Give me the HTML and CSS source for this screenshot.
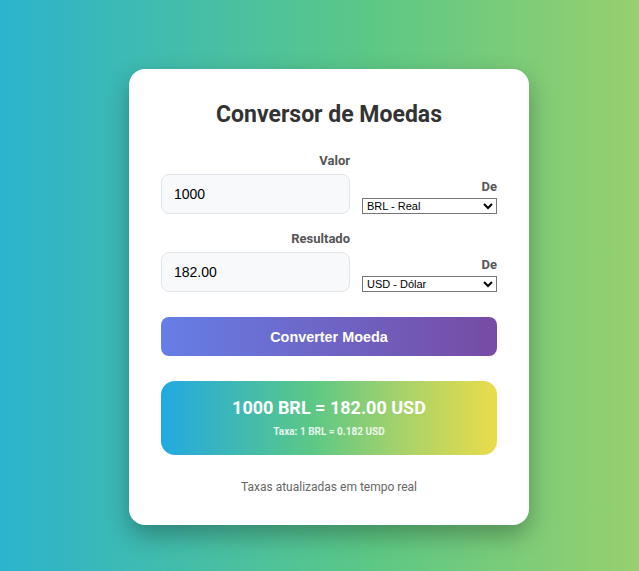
FILE: index.html
```html
<!DOCTYPE html>
<html lang="pt-BR">
<head>
<meta charset="utf-8">
<title>Conversor de Moedas</title>
<link rel="stylesheet" href="styles.css">
</head>
<body>
<main class="card">
  <h1 class="title">Conversor de Moedas</h1>
  <div class="row">
    <div class="field">
      <label class="label" for="valor">Valor</label>
      <input class="amount" id="valor" type="text" value="1000">
    </div>
    <div class="field">
      <label class="label" for="de1">De</label>
      <select class="currency" id="de1">
        <option>BRL - Real</option>
      </select>
    </div>
  </div>
  <div class="row">
    <div class="field">
      <label class="label" for="res">Resultado</label>
      <input class="amount" id="res" type="text" value="182.00" readonly>
    </div>
    <div class="field">
      <label class="label" for="de2">De</label>
      <select class="currency" id="de2">
        <option>USD - Dólar</option>
      </select>
    </div>
  </div>
  <button class="convert" type="button">Converter Moeda</button>
  <div class="result">
    <div class="result-main">1000 BRL = 182.00 USD</div>
    <div class="result-rate">Taxa: 1 BRL = 0.182 USD</div>
  </div>
  <p class="footer">Taxas atualizadas em tempo real</p>
</main>
</body>
</html>
```
FILE: styles.css
```css
html, body {
  margin: 0;
  padding: 0;
}
body {
  min-height: 571px;
  background: linear-gradient(90deg, #2cb3ce 0%, #5cc885 58%, #97d06e 100%);
  font-family: Roboto, "Liberation Sans", Arial, sans-serif;
  display: flex;
  justify-content: center;
  align-items: flex-start;
  padding: 69px 0 0 19px;
  box-sizing: border-box;
}
.card {
  width: 400px;
  box-sizing: border-box;
  background: #fff;
  border-radius: 16px;
  padding: 32px 32px 30px;
  box-shadow: 0 10px 25px rgba(0, 0, 0, 0.3);
  display: flex;
  flex-direction: column;
}
.title {
  margin: 0 0 24px;
  font-size: 23px;
  line-height: 28px;
  font-weight: 700;
  color: #333;
  text-align: center;
}
.row {
  display: grid;
  grid-template-columns: 189px 135px;
  column-gap: 12px;
  align-items: end;
  margin-bottom: 17px;
}
.row + .row {
  margin-bottom: 25px;
}
.field {
  display: flex;
  flex-direction: column;
}
.label {
  display: block;
  text-align: right;
  font-size: 13px;
  line-height: 15px;
  font-weight: 700;
  color: #555;
  margin-bottom: 6px;
}
.field:last-child .label {
  margin-bottom: 4px;
}
.amount {
  box-sizing: border-box;
  height: 40px;
  width: 100%;
  margin: 0;
  padding: 0 12px;
  border: 1px solid #e1e4e8;
  border-radius: 8px;
  background: #f8f9fa;
  font-family: "Liberation Sans", Arial, sans-serif;
  font-size: 14px;
  color: #000;
  outline: none;
}
.currency {
  width: 100%;
  margin: 0;
  padding: 0;
  font-family: "Liberation Sans", Arial, sans-serif;
  font-size: 11px;
  line-height: 11px;
  color: #000;
  background: #fff;
  border: 1px solid #767676;
  border-radius: 0;
}
.convert {
  height: 39px;
  border: 0;
  border-radius: 8px;
  background: linear-gradient(90deg, #667ee6 0%, #764ba4 100%);
  color: #fff;
  font-family: "Liberation Sans", Arial, sans-serif;
  font-size: 14.4px;
  font-weight: 700;
  margin: 0 0 25px;
  padding: 0;
}
.result {
  height: 74px;
  box-sizing: border-box;
  border-radius: 14px;
  background: linear-gradient(90deg, #22a9e2 0%, #5cc886 45%, #a8d26a 72%, #eadc4a 100%);
  color: #fff;
  text-align: center;
  padding-top: 16px;
}
.result-main {
  font-size: 18px;
  line-height: 22px;
  font-weight: 700;
}
.result-rate {
  margin-top: 7px;
  font-size: 10px;
  line-height: 12px;
  font-weight: 700;
  opacity: 0.85;
}
.footer {
  margin: 25px 0 0;
  font-size: 12px;
  line-height: 15px;
  color: #666;
  text-align: center;
}
```
